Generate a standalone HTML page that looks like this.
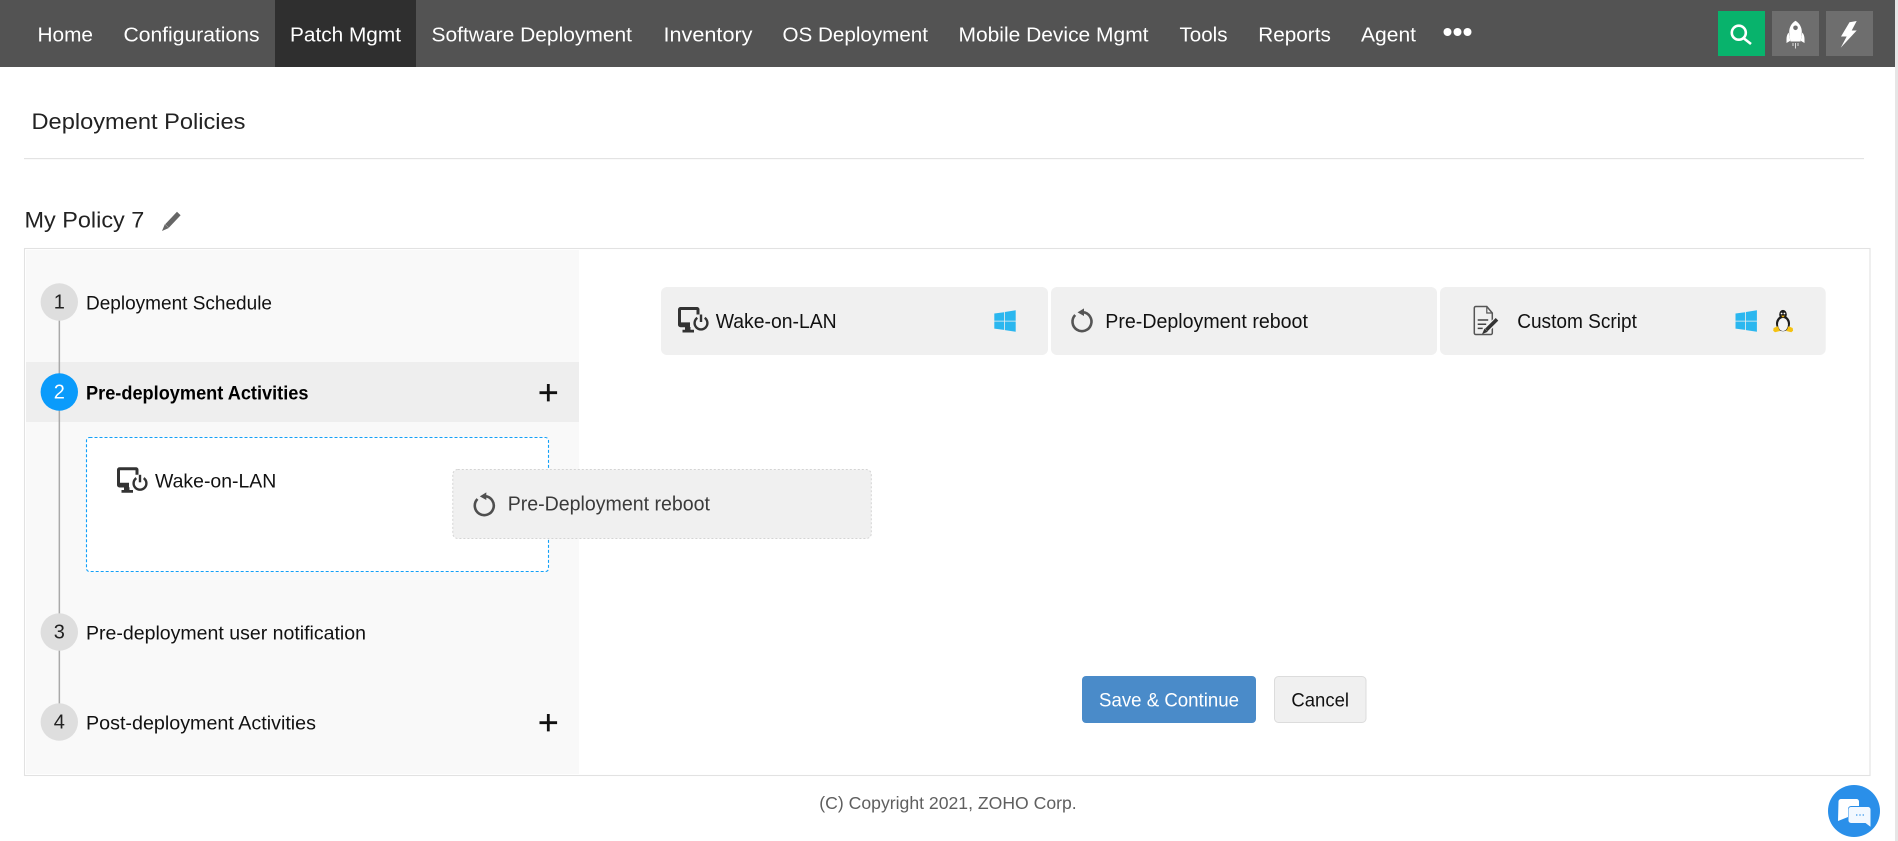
<!DOCTYPE html>
<html lang="en">
<head>
<meta charset="utf-8">
<title>Deployment Policies</title>
<style>
html,body{margin:0;padding:0;background:#fff;width:1898px;height:841px;overflow:hidden}
svg{display:block;position:absolute;left:0;top:0}
text{font-family:"Liberation Sans",Arial,sans-serif}
.n{font-size:20.5px;fill:#fff}
.l{font-size:19.5px;fill:#111}
.c{font-size:20px;fill:#111}
.d{font-size:20px;fill:#222;text-anchor:middle}
</style>
</head>
<body>
<svg width="1898" height="841" viewBox="0 0 1898 841" xmlns="http://www.w3.org/2000/svg">
<defs>
<g id="wake">
<path fill="#333" d="M0 2.500a2.500 2.500 0 0 1 2.500-2.500h16.500a2.500 2.500 0 0 1 2.500 2.500v5h-3V3H3v12.400h9v4.800H2.500a2.500 2.500 0 0 1-2.500-2.500z"/>
<path fill="#333" d="M7 20h5.500v2.700h3.500v2.800H4.500v-2.800H7z"/>
<path fill="none" stroke="#333" stroke-width="2.400" d="M19.300 10.800A6.400 6.400 0 1 0 26.700 10.800"/>
<path fill="none" stroke="#333" stroke-width="2.400" d="M23 7.500v7.500"/>
</g>
<g id="win" fill="#2bb7ef">
<path d="M0 3.200L9.700 1.900V10.400H0z"/>
<path d="M10.500 1.700L21.400 0V10.400H10.500z"/>
<path d="M0 11.200H9.700V19.600L0 18.300z"/>
<path d="M10.500 11.200H21.400V21.400L10.500 19.800z"/>
</g>
<g id="reboot">
<path fill="none" stroke-width="2.600" d="M-6.800-6.700A9.500 9.500 0 1 0 1-9.500"/>
<path stroke="none" d="M2-13.300L-4.500-9.300 2-5.700z"/>
</g>
<filter id="b" x="-5%" y="-5%" width="110%" height="110%"><feGaussianBlur stdDeviation="0.3"/></filter>
</defs>

<!-- scrollbar strip -->
<rect x="1895" y="0" width="3" height="841" fill="#e6e6e6"/>

<!-- nav -->
<rect x="0" y="0" width="1895" height="67" fill="#535353"/>
<rect x="275" y="0" width="141" height="67" fill="#2f2f2f"/>
<text class="n" x="37.500" y="41.500" textLength="55.500" lengthAdjust="spacingAndGlyphs">Home</text>
<text class="n" x="123.500" y="41.500" textLength="136" lengthAdjust="spacingAndGlyphs">Configurations</text>
<text class="n" x="290" y="41.500" textLength="111" lengthAdjust="spacingAndGlyphs">Patch Mgmt</text>
<text class="n" x="431.500" y="41.500" textLength="200.500" lengthAdjust="spacingAndGlyphs">Software Deployment</text>
<text class="n" x="663.500" y="41.500" textLength="89" lengthAdjust="spacingAndGlyphs">Inventory</text>
<text class="n" x="782.500" y="41.500" textLength="145.500" lengthAdjust="spacingAndGlyphs">OS Deployment</text>
<text class="n" x="958.500" y="41.500" textLength="190" lengthAdjust="spacingAndGlyphs">Mobile Device Mgmt</text>
<text class="n" x="1179.500" y="41.500" textLength="48" lengthAdjust="spacingAndGlyphs">Tools</text>
<text class="n" x="1258.300" y="41.500" textLength="72.500" lengthAdjust="spacingAndGlyphs">Reports</text>
<text class="n" x="1361" y="41.500" textLength="55" lengthAdjust="spacingAndGlyphs">Agent</text>
<circle cx="1447.500" cy="32" r="4" fill="#fff"/>
<circle cx="1457.500" cy="32" r="4" fill="#fff"/>
<circle cx="1467.500" cy="32" r="4" fill="#fff"/>

<rect x="1718" y="11" width="47" height="45" fill="#08b36c"/>
<rect x="1772" y="11" width="47" height="45" fill="#6e6e6e"/>
<rect x="1826" y="11" width="47" height="45" fill="#6e6e6e"/>
<circle cx="1738.800" cy="32.700" r="7" fill="none" stroke="#fff" stroke-width="2.600"/>
<path d="M1744 38.500L1751 44" stroke="#fff" stroke-width="2.600" fill="none"/>
<path fill="#fff" d="M1795.500 20.700c4 2.500 6.300 6.500 6.300 11 0 3-.5 6-1.300 9.800h-10c-.8-3.800-1.300-6.800-1.300-9.800 0-4.500 2.300-8.500 6.300-11z"/>
<circle cx="1795.500" cy="27.800" r="2.300" fill="#6e6e6e"/>
<path fill="#fff" d="M1788.700 32.500c-1.400 1.500-2.200 4-2.200 6.500v4l3.800-2.300zM1802.300 32.500c1.400 1.500 2.200 4 2.200 6.500v4l-3.800-2.300z"/>
<path stroke="#ddd" stroke-width="1" fill="none" d="M1793 43v3M1795.500 43v5.500M1798 43v3"/>
<path fill="#fff" d="M1849.500 22.300L1856.700 21 1851.700 30.500H1856.700L1840.700 47.700 1846.700 36.500H1841z"/>

<!-- heading -->
<text x="31.500" y="129" font-size="22.500" fill="#222" textLength="214" lengthAdjust="spacingAndGlyphs">Deployment Policies</text>
<rect x="24" y="158" width="1840" height="1.200" fill="#e3e3e3"/>
<text x="24.500" y="227.500" font-size="22.500" fill="#222" textLength="119.800" lengthAdjust="spacingAndGlyphs">My Policy 7</text>
<path d="M178.800 213.500L167 226" stroke="#666" stroke-width="5" fill="none"/>
<path d="M164.800 224.200L168.800 228 162 231z" fill="#666"/>

<!-- container -->
<rect x="24.500" y="248.500" width="1845.500" height="527" fill="#fff" stroke="#e2e2e2" stroke-width="1.100"/>
<rect x="26" y="250" width="553" height="524" fill="#f9f9f9"/>
<rect x="26" y="362" width="553" height="60" fill="#eeeeee"/>
<rect x="58.600" y="320" width="1.500" height="384" fill="#aaaaaa"/>

<circle cx="59.300" cy="302" r="18.700" fill="#dedede"/>
<circle cx="59.300" cy="392" r="18.700" fill="#0a9bfb"/>
<circle cx="59.300" cy="632" r="18.700" fill="#dedede"/>
<circle cx="59.300" cy="722" r="18.700" fill="#dedede"/>
<text class="d" x="59.300" y="308.500">1</text>
<text class="d" x="59.300" y="398.500" style="fill:#fff">2</text>
<text class="d" x="59.300" y="638.500">3</text>
<text class="d" x="59.300" y="728.500">4</text>

<text class="l" x="86" y="309.400" textLength="186" lengthAdjust="spacingAndGlyphs">Deployment Schedule</text>
<text class="l" x="86" y="399.500" font-weight="bold" style="fill:#000" textLength="222.500" lengthAdjust="spacingAndGlyphs">Pre-deployment Activities</text>
<text class="l" x="86" y="639.400" textLength="280" lengthAdjust="spacingAndGlyphs">Pre-deployment user notification</text>
<text class="l" x="86" y="729.400" textLength="230" lengthAdjust="spacingAndGlyphs">Post-deployment Activities</text>
<path d="M539.500 392.700h17.600M548.300 384v17.400" stroke="#111" stroke-width="2.800" fill="none"/>
<path d="M539.500 722.700h17.600M548.300 714v17.400" stroke="#111" stroke-width="2.800" fill="none"/>

<!-- drop zone -->
<rect x="86.500" y="437.500" width="462" height="134" rx="3" fill="#fff" stroke="#12a0f8" stroke-width="1.100" stroke-dasharray="3 2"/>
<use href="#wake" x="117" y="467.300"/>
<text class="l" x="155" y="487.500" textLength="121.300" lengthAdjust="spacingAndGlyphs">Wake-on-LAN</text>

<!-- cards -->
<rect x="661" y="287" width="387" height="68" rx="6" fill="#f0f0f0"/>
<rect x="1051" y="287" width="386" height="68" rx="6" fill="#f0f0f0"/>
<rect x="1440" y="287" width="385.700" height="68" rx="6" fill="#f0f0f0"/>
<use href="#wake" x="678" y="307"/>
<text class="c" x="715.700" y="328" textLength="121" lengthAdjust="spacingAndGlyphs">Wake-on-LAN</text>
<use href="#win" x="994.300" y="310.300"/>
<use href="#reboot" x="1082" y="321.700" stroke="#555" fill="#555"/>
<text class="c" x="1105.300" y="328" textLength="202.600" lengthAdjust="spacingAndGlyphs">Pre-Deployment reboot</text>

<path d="M1474.300 308a1.500 1.500 0 0 1 1.500-1.500h11l5.500 6.500v20a1.500 1.500 0 0 1-1.500 1.500h-15a1.500 1.500 0 0 1-1.500-1.500z" fill="none" stroke="#555" stroke-width="1.500"/>
<path d="M1486.800 306.500v6.500h5.500" fill="none" stroke="#555" stroke-width="1.200"/>
<path d="M1477.700 320h10.500M1477.700 324.200h8.500M1477.700 328.400h5" fill="none" stroke="#444" stroke-width="1.500"/>
<path d="M1497.500 319L1486 330.500" stroke="#f0f0f0" stroke-width="6" fill="none"/>
<path d="M1497 319.300L1486.300 330" stroke="#333" stroke-width="3.600" fill="none"/>
<path d="M1484.500 328.500l3.300 3.200-5.800 2.600z" fill="#333"/>
<text class="c" x="1517.200" y="328" textLength="119.700" lengthAdjust="spacingAndGlyphs">Custom Script</text>
<use href="#win" x="1735.500" y="310.300"/>

<!-- tux -->
<ellipse cx="1783" cy="323.500" rx="7" ry="7.800" fill="#1c1c1c"/>
<ellipse cx="1783" cy="314.500" rx="3.800" ry="4.600" fill="#1c1c1c"/>
<ellipse cx="1783" cy="324.500" rx="5" ry="6.500" fill="#f4f4f4"/>
<circle cx="1781.600" cy="313.500" r=".9" fill="#fff"/>
<circle cx="1784.400" cy="313.500" r=".9" fill="#fff"/>
<path d="M1781 315.600h4l-2 2z" fill="#f5b70f"/>
<path d="M1773.600 328l4.200-1.800 2.200 4.800-5 1.200-1.800-1.500zM1792.700 328l-4.200-1.800-2.200 4.800 5 1.200 1.800-1.500z" fill="#f5c211"/>

<!-- buttons -->
<rect x="1082" y="676" width="174" height="47" rx="4" fill="#4a8bc9"/>
<text x="1099" y="706.500" font-size="19.500" fill="#fff" textLength="140" lengthAdjust="spacingAndGlyphs">Save &amp; Continue</text>
<rect x="1274.500" y="676.500" width="91.500" height="46" rx="4" fill="#f0f0f0" stroke="#dcdcdc"/>
<text x="1291.400" y="706.500" font-size="19.500" fill="#111" textLength="57.600" lengthAdjust="spacingAndGlyphs">Cancel</text>

<!-- dragged ghost -->
<g filter="url(#b)">
<rect x="452.800" y="469.500" width="418.500" height="69" rx="5" fill="#f0f0f0" stroke="#d4d4d4" stroke-width="1" stroke-dasharray="2 2"/>
<use href="#reboot" x="484.300" y="505.700" stroke="#505050" fill="#505050"/>
<text class="c" x="507.700" y="510.700" style="fill:#3a3a3a" textLength="202.300" lengthAdjust="spacingAndGlyphs">Pre-Deployment reboot</text>
</g>

<!-- footer -->
<text x="819.300" y="808.800" font-size="17.500" fill="#5f5f5f" textLength="257.400" lengthAdjust="spacingAndGlyphs">(C) Copyright 2021, ZOHO Corp.</text>

<!-- chat -->
<circle cx="1854" cy="811" r="26" fill="#2a8fe9"/>
<path d="M1841 799h15.500a2.500 2.500 0 0 1 2.500 2.500V806h-8a3 3 0 0 0-3 3v8l-10 4 .5-19.500a2.500 2.500 0 0 1 2.500-2.500z" fill="#fff"/>
<path d="M1851 807h17a2.500 2.500 0 0 1 2.500 2.500v17.300l-5-3.800H1851a2.500 2.500 0 0 1-2.500-2.500v-11a2.500 2.500 0 0 1 2.500-2.500z" fill="#f2f8ff"/>
<path d="M1856 815h1.400M1859.300 815h1.400M1862.600 815h1.400" stroke="#5aa8ee" stroke-width="1.400" fill="none"/>
</svg>
</body>
</html>
